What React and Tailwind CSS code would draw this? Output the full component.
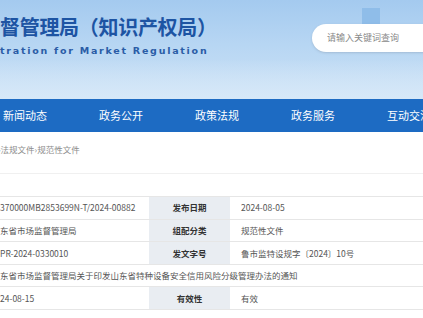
const NAV = ["新闻动态", "政务公开", "政策法规", "政务服务", "互动交流"];

const ROWS = [
  { value: "370000MB2853699N-T/2024-00882", label: "发布日期", extra: "2024-08-05" },
  { value: "东省市场监督管理局", label: "组配分类", extra: "规范性文件" },
  { value: "PR-2024-0330010", label: "发文字号", extra: "鲁市监特设规字〔2024〕10号" },
  { full: "东省市场监督管理局关于印发山东省特种设备安全信用风险分级管理办法的通知" },
  { value: "24-08-15", label: "有效性", extra: "有效" },
];

function App() {
  return (
    <div className="h-[318px] w-[423px] overflow-hidden bg-white font-['Noto_Sans_CJK_SC','Noto_Sans',sans-serif]">
      <header className="relative h-[99px] overflow-hidden bg-[linear-gradient(180deg,#a4caef_0%,#b7d6f3_45%,#cde2f6_100%)]">
        <div className="absolute left-[362px] top-[8px] h-[18px] w-[18px] bg-[#8fbde9]" />
        <div className="absolute bottom-0 left-0 right-0 h-[40px] bg-[linear-gradient(180deg,transparent,#d6e8f8)]" />
        <div className="relative flex items-start justify-between">
          <div className="pt-[15px]">
            <div className="whitespace-nowrap text-[20px] font-bold leading-[24px] tracking-[-0.3px] text-[#1d54a3]">
              督管理局（知识产权局）
            </div>
            <div className="mt-[6px] whitespace-nowrap font-['DejaVu_Sans',sans-serif] text-[9.5px] font-bold leading-[12px] tracking-[1.75px] text-[#2a5ca6]">
              tration for Market Regulation
            </div>
          </div>
          <div className="mt-[24px] flex h-[28px] w-[130px] -mr-[19px] items-center rounded-l-full bg-white pl-[15px] text-[9px] text-[#8a8a8a] shadow-sm">
            请输入关键词查询
          </div>
        </div>
      </header>

      <nav className="flex h-[33px] items-center gap-[52px] bg-[#1d6bc3] pl-[3px] text-[11px] text-white">
        {NAV.map((item) => (
          <span key={item} className="w-[44px] shrink-0 whitespace-nowrap">
            {item}
          </span>
        ))}
      </nav>

      <div className="flex h-[34px] items-center text-[8.5px] text-[#8c8c8c]">
        <span className="-ml-[2px]">›法规文件›规范性文件</span>
      </div>

      <div className="mt-[7px] h-[23px] border-t border-[#f0f0f0]" />

      <table className="w-full border-collapse text-[8.5px] text-[#555]">
        <tbody>
          {ROWS.map((row, i) =>
            row.full ? (
              <tr key={i} className="h-[22.6px] border-y border-[#e6e6e6]">
                <td colSpan={3} className="whitespace-nowrap p-0">
                  {row.full}
                </td>
              </tr>
            ) : (
              <tr key={i} className="h-[22.6px] border-y border-[#e6e6e6]">
                <td className="w-[149px] whitespace-nowrap p-0">{row.value}</td>
                <td className="w-[81px] bg-[#e9edf2] p-0 text-center font-bold text-[#333]">{row.label}</td>
                <td className="whitespace-nowrap p-0 pl-[11px]">{row.extra}</td>
              </tr>
            )
          )}
        </tbody>
      </table>
    </div>
  );
}

export default App;
